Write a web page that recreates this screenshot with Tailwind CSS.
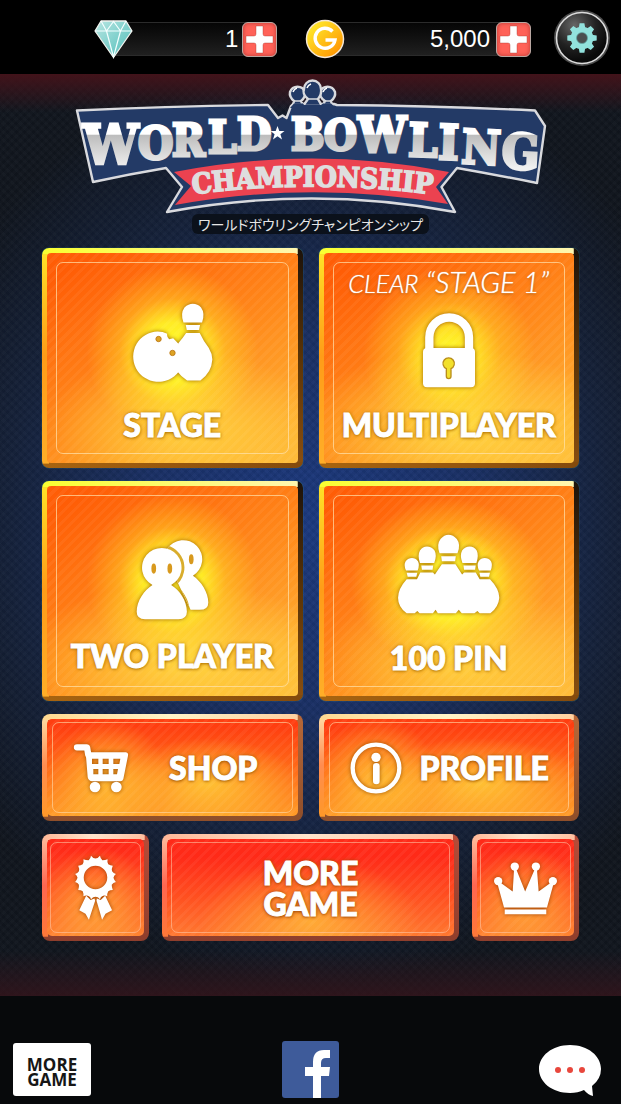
<!DOCTYPE html>
<html lang="en">
<head>
<meta charset="utf-8">
<meta name="viewport" content="width=device-width, initial-scale=1">
<title>World Bowling Championship</title>
<script src="https://cdn.jsdelivr.net/npm/@tailwindcss/browser@4"></script>
</head>
<body class="flex min-h-screen flex-col bg-[#070809] font-['Lato','Noto_Sans_CJK_JP',sans-serif] text-white">

<header class="flex h-[74px] items-center bg-black pt-1 pr-[10px] pl-[94px]">
  <!-- gems -->
  <div class="flex flex-[183] items-center">
    <svg class="relative h-[39px] w-[39px] shrink-0" viewBox="0 0 39 39" aria-hidden="true">
      <defs><linearGradient id="gem" x1="0" y1="0" x2="1" y2="1"><stop offset="0" stop-color="#b8e6e2"/><stop offset="1" stop-color="#4ebdb9"/></linearGradient></defs>
      <path d="M7 1H32L38 11L19.500 37.500L1 11Z" fill="url(#gem)" stroke="#f2f2ee" stroke-width="1.300" stroke-linejoin="round"/>
      <path d="M1 11H38M7 1L12.500 11L19.500 1.500L26.500 11L32 1M12.500 11L19.500 37L26.500 11" fill="none" stroke="#f4ffff" stroke-width="1.200"/>
    </svg>
    <div class="-mr-1 -ml-5 flex h-[34px] flex-1 items-center justify-end border-y border-[#2b2b2b] bg-linear-to-b from-[#060606] to-[#202020] pr-2 font-['Liberation_Sans',sans-serif] text-2xl">1</div>
    <button aria-label="Add gems" class="relative flex size-[35px] items-center justify-center rounded-md border border-[#b9a7a2] bg-[#ff6258] shadow-[inset_0_0_4px_#b83a34]">
      <svg class="size-[29px]" viewBox="0 0 29 29"><path d="M11 1H18V9Q18 11 20 11H28V18H20Q18 18 18 20V28H11V20Q11 18 9 18H1V11H9Q11 11 11 9Z" fill="#fff" stroke="#a93730" stroke-width=".4"/></svg>
    </button>
  </div>
  <!-- coins -->
  <div class="ml-[28px] flex flex-[225] items-center">
    <svg class="relative h-[40px] w-[40px] shrink-0" viewBox="0 0 40 40" aria-hidden="true">
      <defs><linearGradient id="coin" x1="0" y1="0" x2="1" y2="1"><stop offset=".1" stop-color="#ffec2c"/><stop offset=".9" stop-color="#ff9300"/></linearGradient></defs>
      <circle cx="20" cy="20" r="18.500" fill="url(#coin)" stroke="#f3e6d6" stroke-width="1.500"/>
      <path d="M27.500 12.500A10 10 0 1 0 30 21H20.500" fill="none" stroke="#fff" stroke-width="3.400"/>
    </svg>
    <div class="-mr-1 -ml-5 flex h-[34px] flex-1 items-center justify-end border-y border-[#2b2b2b] bg-linear-to-b from-[#060606] to-[#202020] pr-[10px] font-['Liberation_Sans',sans-serif] text-2xl">5,000</div>
    <button aria-label="Add coins" class="relative flex size-[35px] items-center justify-center rounded-md border border-[#b9a7a2] bg-[#ff6258] shadow-[inset_0_0_4px_#b83a34]">
      <svg class="size-[29px]" viewBox="0 0 29 29"><path d="M11 1H18V9Q18 11 20 11H28V18H20Q18 18 18 20V28H11V20Q11 18 9 18H1V11H9Q11 11 11 9Z" fill="#fff" stroke="#a93730" stroke-width=".4"/></svg>
    </button>
  </div>
  <button aria-label="Settings" class="ml-[22px] size-[58px] shrink-0">
    <svg viewBox="0 0 58 58">
      <defs>
        <radialGradient id="knob" cx=".35" cy=".25" r=".7"><stop offset="0" stop-color="#666"/><stop offset=".6" stop-color="#222"/><stop offset="1" stop-color="#0a0a0a"/></radialGradient>
      </defs>
      <circle cx="29" cy="28" r="28" fill="#4c4c4c"/>
      <circle cx="29" cy="28" r="25.500" fill="url(#knob)" stroke="#dcdcdc" stroke-width="1.600"/>
      <g fill="#92e2dd">
        <path d="M26.600 13.300H31.400L32.600 20H25.400ZM25.400 36H32.600L31.400 42.700H26.600ZM14.300 25.600V30.400L21 31.600V24.400ZM37 24.400V31.600L43.700 30.400V25.600Z"/>
        <path transform="rotate(45 29 28)" d="M26.600 13.300H31.400L32.600 20H25.400ZM25.400 36H32.600L31.400 42.700H26.600ZM14.300 25.600V30.400L21 31.600V24.400ZM37 24.400V31.600L43.700 30.400V25.600Z"/>
        <circle cx="29" cy="28" r="11.300"/>
      </g>
      <circle cx="29" cy="28" r="5.500" fill="#4b4f50" stroke="#60a5a2" stroke-width=".7"/>
    </svg>
  </button>
</header>

<main class="flex flex-1 flex-col items-center bg-[linear-gradient(#42131a_0,#42131a00_38px),linear-gradient(to_top,#34141bd0_0,#34141b00_45px),repeating-linear-gradient(45deg,#ffffff03_0_3px,#00000008_3px_6px),repeating-linear-gradient(135deg,#ffffff03_0_3px,#00000008_3px_6px),radial-gradient(ellipse_68%_50%_at_50%_49%,#1c3a80_0,#1a3064_40%,#15213a_72%,#11161e_100%)] px-[42px] pt-1 pb-[54px]">

  <h1 class="w-full max-w-[472px]" aria-label="World Bowling Championship">
  <svg class="w-full" viewBox="75 78 472 136">
    <defs>
      <linearGradient id="steel" gradientUnits="userSpaceOnUse" x1="0" y1="110" x2="0" y2="174"><stop offset="0" stop-color="#fff"/><stop offset=".38" stop-color="#fff"/><stop offset=".39" stop-color="#bcbcbc"/><stop offset=".9" stop-color="#f0f0f0"/></linearGradient>
      <path id="arc" d="M180 196Q312 177 445 196"/>
    </defs>
    <g fill="#233a66" stroke="#d9dade" stroke-width="2.400">
      <path stroke-linejoin="round" d="M77 110.500Q170 106 268 105L278 118L282.500 115.500L286.500 118L291 106L293 104H334L337 105Q440 106 535 110.500L545 126L537 183Q497 175 457 168L441.500 187L455 212Q312 185 167 212L182 187L166 168Q130 174 93 182Z"/>
      <path d="M293 105L294 101Q289 97 290 92A8 8 0 0 1 305 92Q306 97 301 101L303 105ZM323 105L325 101Q319 97 320 92A8 8 0 0 1 335 92Q336 97 331 101L332 105Z"/>
      <path d="M303 106L308 99Q302 94 304 89A8.500 8.500 0 0 1 321 89Q322 94 318 99L322 106Z"/>
    </g>
    <path d="M294 103.500H303L304 105H321L323 103.500H331L336 108H290Z" fill="#233a66"/>
    <path d="M294 101H302M308 99H318M323 101H332" stroke="#d9dade" stroke-width="1.400"/>
    <path d="M293 92Q294 89 297 88M307 88Q308 85 311 84M323 92Q324 89 327 88" fill="none" stroke="#fff" stroke-width="1.500"/>
    <path d="M174 172Q312 145 449 172L436 187L448 204Q312 180 175 205L191 186Z" fill="#eb4250"/>
    <g fill="url(#steel)" stroke="url(#steel)" stroke-width="3" font-family="'DejaVu Serif Condensed','DejaVu Serif',serif" font-weight="700">
      <text><tspan x="83" y="164" font-size="55">W</tspan><tspan x="138" y="159" font-size="45">O</tspan><tspan x="172" y="156" font-size="44">R</tspan><tspan x="208" y="153" font-size="45">L</tspan><tspan x="237" y="150" font-size="44">D</tspan></text>
      <text><tspan x="291" y="150" font-size="44">B</tspan><tspan x="324" y="150" font-size="42">O</tspan><tspan x="358" y="152" font-size="48">W</tspan><tspan x="408" y="156" font-size="46" rotate="2">L</tspan><tspan x="438" y="159" font-size="48" rotate="2">I</tspan><tspan x="461" y="163" font-size="47" rotate="3">N</tspan><tspan x="501" y="168" font-size="49" rotate="3">G</tspan></text>
    </g>
    <path d="M277.500 126L279.300 131H284.500L280.400 134.200L282 139.500L277.500 136.300L273 139.500L274.600 134.200L270.500 131H275.700Z" fill="#fff"/>
    <text fill="#dedede" stroke="#dedede" stroke-width="1.600" font-family="'DejaVu Serif Condensed','DejaVu Serif',serif" font-weight="700" font-size="28" text-anchor="middle"><textPath href="#arc" startOffset="50%">CHAMPIONSHIP</textPath></text>
  </svg>
  </h1>
  <p class="flex h-5 items-center rounded-md bg-[#0b111b] px-[6px] font-['Noto_Sans_CJK_JP',sans-serif] text-[14px] leading-5 whitespace-nowrap text-[#e6e6e6] [font-feature-settings:'palt']">ワールドボウリングチャンピオンシップ</p>

  <nav class="mt-[14px] grid w-full grid-cols-2 gap-x-4 gap-y-[13px]" aria-label="Main menu">

    <button class="relative h-[220px] rounded-[7px] bg-[linear-gradient(to_right,#f9ff30,#fff6b0),linear-gradient(#ffe528,#ff9c18_50%,#ffae28),linear-gradient(to_right,#a86410,#844a0c),linear-gradient(#1c120a,#5b3406_50%,#8a4f10)] bg-[length:98%_6px,7px_98%,100%_6px,100%_100%] bg-[position:0_0,0_0,0_100%,0_0] bg-no-repeat p-[5px] shadow-[0_0_1px_#41c4c8]">
      <span class="flex h-full flex-col items-center justify-end rounded-[4px] bg-[repeating-linear-gradient(135deg,#ffffff0c_0_3px,#ffffff00_3px_7px),radial-gradient(circle_86px_at_50%_47%,#ffff28_0,#ffff28d8_34%,#ffee2860_62%,#ffee3000_100%),radial-gradient(ellipse_54%_36%_at_54%_82%,#fff04aa0_0,#fff04a00_100%),linear-gradient(150deg,#ff5d06_8%,#ff8c1c_55%,#ffbb3a)] pb-[18px]">
        <span class="pointer-events-none absolute inset-[14px] rounded-[7px] border border-[#ffe4b0b0]"></span>
        <svg class="mb-[22px] h-[80px] w-[81px] drop-shadow-[0_0_2px_#a06000]" viewBox="292 183 244 240" fill="#fff">
          <path d="M369 268Q385 268 398 275Q396 284 404 292L416 289L432 305V390A76 76 0 1 1 369 268Z"/>
          <path d="M447 241Q437 214 450 196Q462 185 475 185Q490 185 500 196Q513 214 503 241ZM454 249H497L494 264H457ZM455 273H496Q507 297 523 317Q534 335 534 353Q532 392 498 416H458Q438 402 428 388Q410 350 432 303Q446 287 455 273Z"/>
          <g fill="#dda323" stroke="#c17e1a" stroke-width="3"><circle cx="372" cy="291" r="8"/><circle cx="414" cy="333" r="8"/></g>
        </svg>
        <span class="text-[32px] leading-10 font-black [-webkit-text-stroke:1px_#fff] [text-shadow:0_0_4px_#a86a00,0_1px_3px_#b87800]">STAGE</span>
      </span>
    </button>

    <button class="relative h-[220px] rounded-[7px] bg-[linear-gradient(to_right,#f9ff30,#fff6b0),linear-gradient(#ffe528,#ff9c18_50%,#ffae28),linear-gradient(to_right,#a86410,#844a0c),linear-gradient(#1c120a,#5b3406_50%,#8a4f10)] bg-[length:98%_6px,7px_98%,100%_6px,100%_100%] bg-[position:0_0,0_0,0_100%,0_0] bg-no-repeat p-[5px] shadow-[0_0_1px_#41c4c8]">
      <span class="flex h-full flex-col items-center justify-end rounded-[4px] bg-[repeating-linear-gradient(135deg,#ffffff0c_0_3px,#ffffff00_3px_7px),radial-gradient(circle_86px_at_50%_48%,#ffff28_0,#ffff28c0_30%,#ffee2858_60%,#ffee3000_100%),radial-gradient(ellipse_64%_36%_at_54%_82%,#fff04ab0_0,#fff04a00_100%),linear-gradient(150deg,#ff5d06_8%,#ff8c1c_55%,#ffbb3a)] pb-[18px]">
        <span class="pointer-events-none absolute inset-[14px] rounded-[7px] border border-[#ffe4b0b0]"></span>
        <span class="mb-[13px] text-[29px] leading-8 font-light whitespace-nowrap italic [text-shadow:0_0_1px_#fff,0_1px_3px_#a05000]"><span class="text-[25px] leading-8">CLEAR</span> “STAGE 1”</span>
        <svg class="mb-[17px] h-[76px] w-[54px] drop-shadow-[0_0_2px_#a06000]" viewBox="335 212 162 228" fill="#fff">
          <path d="M357 328V288A59 59 0 0 1 476 288V328" fill="none" stroke="#fff" stroke-width="25"/>
          <rect x="338" y="320" width="156" height="118" rx="12"/>
          <path d="M408 382A17 17 0 1 1 422 382V405Q422 412 415 412Q408 412 408 405Z" fill="#f2e02c" stroke="#b98d1a" stroke-width="4"/>
        </svg>
        <span class="text-[32px] leading-10 font-black [-webkit-text-stroke:1px_#fff] [text-shadow:0_0_4px_#a86a00,0_1px_3px_#b87800]">MULTIPLAYER</span>
      </span>
    </button>

    <button class="relative h-[220px] rounded-[7px] bg-[linear-gradient(to_right,#f9ff30,#fff6b0),linear-gradient(#ffe528,#ff9c18_50%,#ffae28),linear-gradient(to_right,#a86410,#844a0c),linear-gradient(#1c120a,#5b3406_50%,#8a4f10)] bg-[length:98%_6px,7px_98%,100%_6px,100%_100%] bg-[position:0_0,0_0,0_100%,0_0] bg-no-repeat p-[5px] shadow-[0_0_1px_#41c4c8]">
      <span class="flex h-full flex-col items-center justify-end rounded-[4px] bg-[repeating-linear-gradient(135deg,#ffffff0c_0_3px,#ffffff00_3px_7px),radial-gradient(circle_86px_at_50%_45%,#ffff28_0,#ffff28d8_34%,#ffee2860_62%,#ffee3000_100%),radial-gradient(ellipse_64%_36%_at_54%_82%,#fff04ab0_0,#fff04a00_100%),linear-gradient(150deg,#ff5d06_8%,#ff8c1c_55%,#ffbb3a)] pb-5">
        <span class="pointer-events-none absolute inset-[14px] rounded-[7px] border border-[#ffe4b0b0]"></span>
        <svg class="mb-4 h-[82px] w-[75px] drop-shadow-[0_0_2px_#a06000]" viewBox="302 188 224 244" fill="#fff">
          <defs><clipPath id="rear"><path d="M398 220A57 57 0 1 1 475 300C500 317 521 350 521 380Q521 402 495 402H468L420 300Z"/></clipPath></defs>
          <path d="M398 220A57 57 0 1 1 475 300C500 317 521 350 521 380Q521 402 495 402H468L420 300Z"/>
          <path clip-path="url(#rear)" d="M354 328A59 59 0 1 1 410 328C435 343 457 375 457 408Q457 430 432 430H332Q307 430 307 408C307 375 330 343 354 328Z" stroke="#d9ad2c" stroke-width="17" stroke-linejoin="round"/>
          <path d="M354 328A59 59 0 1 1 410 328C435 343 457 375 457 408Q457 430 432 430H332Q307 430 307 408C307 375 330 343 354 328Z"/>
          <g fill="#d8991d"><ellipse cx="358" cy="279" rx="7" ry="15"/><ellipse cx="406" cy="279" rx="7" ry="15"/><ellipse cx="470" cy="251" rx="7" ry="15"/></g>
        </svg>
        <span class="text-[32px] leading-10 font-black whitespace-nowrap [-webkit-text-stroke:1px_#fff] [text-shadow:0_0_4px_#a86a00,0_1px_3px_#b87800]">TWO PLAYER</span>
      </span>
    </button>

    <button class="relative h-[220px] rounded-[7px] bg-[linear-gradient(to_right,#f9ff30,#fff6b0),linear-gradient(#ffe528,#ff9c18_50%,#ffae28),linear-gradient(to_right,#a86410,#844a0c),linear-gradient(#1c120a,#5b3406_50%,#8a4f10)] bg-[length:98%_6px,7px_98%,100%_6px,100%_100%] bg-[position:0_0,0_0,0_100%,0_0] bg-no-repeat p-[5px] shadow-[0_0_1px_#41c4c8]">
      <span class="flex h-full flex-col items-center justify-end rounded-[4px] bg-[repeating-linear-gradient(135deg,#ffffff0c_0_3px,#ffffff00_3px_7px),radial-gradient(ellipse_98px_84px_at_50%_46%,#ffff28_0,#ffff28d8_40%,#ffee2860_66%,#ffee3000_100%),radial-gradient(ellipse_54%_36%_at_54%_82%,#fff04aa0_0,#fff04a00_100%),linear-gradient(150deg,#ff5d06_8%,#ff8c1c_55%,#ffbb3a)] pb-[18px]">
        <span class="pointer-events-none absolute inset-[14px] rounded-[7px] border border-[#ffe4b0b0]"></span>
        <svg class="mb-[23px] h-[81px] w-[103px] drop-shadow-[0_0_2px_#a06000]" viewBox="262 175 308 244" fill="#fff">
          <path d="M389 233Q379 207 392 190Q403 177 416 177Q430 177 441 190Q454 207 443 233ZM394 242H438L436 257H396Z"/>
          <path d="M330 262Q322 240 330 225Q338 213 351 213Q365 213 374 225Q382 240 373 262ZM334 270H370L368 283H336ZM458 262Q449 240 457 225Q466 213 480 213Q493 213 501 225Q508 240 500 262ZM461 270H498L496 283H463Z"/>
          <path d="M288 285Q280 268 287 257Q295 247 306 247Q317 247 324 257Q330 268 323 285ZM290 292H322L319 304H293ZM508 285Q500 268 507 257Q514 247 525 247Q537 247 544 257Q550 268 543 285ZM509 292H541L538 304H512Z"/>
          <path d="M290 311H321L331 291H369L375 297L396 266H437L457 297L463 291H498L510 311H541Q569 340 569 367Q567 395 542 414H510L503 407L494 414H456L447 403L438 414H384L377 403L369 414H329L322 407L314 414H290Q264 395 264 367Q264 340 290 311Z"/>
        </svg>
        <span class="text-[32px] leading-10 font-black whitespace-nowrap [-webkit-text-stroke:1px_#fff] [text-shadow:0_0_4px_#a86a00,0_1px_3px_#b87800]">100 PIN</span>
      </span>
    </button>

    <button class="relative h-[107px] rounded-[8px] bg-[linear-gradient(to_right,#ffd890,#fff4c8_50%,#ffd0a0),linear-gradient(#ffe0a8,#ff8c50_50%,#ff9828),linear-gradient(#b86838,#8e4e2a)] bg-[length:98%_6px,6px_96%,100%_100%] bg-[position:0_0,0_0,0_0] bg-no-repeat p-[5px]">
      <span class="flex h-full items-center rounded-[5px] bg-[repeating-linear-gradient(135deg,#ffffff0c_0_3px,#ffffff00_3px_7px),radial-gradient(circle_60px_at_24%_62%,#ffd83ab0_0,#ffd83a00_100%),radial-gradient(ellipse_90px_45px_at_64%_66%,#ffd83ac0_0,#ffd83a00_100%),linear-gradient(#ff3e10_8%,#ff6a18_50%,#ff9c28)] pl-[26px]">
        <span class="pointer-events-none absolute inset-x-[10px] inset-y-2 rounded-[7px] border border-[#ffd8a8a0]"></span>
        <svg class="h-[50px] w-[56px] drop-shadow-[0_0_2px_#a05000]" viewBox="114 104 168 150" fill="#fff">
          <path d="M126 117H156L160 140" fill="none" stroke="#fff" stroke-width="19" stroke-linecap="round" stroke-linejoin="round"/>
          <path fill-rule="evenodd" d="M152 132H273Q281 133 279 142L265 212Q263 219 256 219H172Q160 218 158 206ZM171 151V167H190V151ZM203 151V167H221V151ZM235 151V167H253L256 151ZM175 182V198H190V182ZM203 182V198H221V182ZM235 182V198H246L249 182Z"/>
          <circle cx="180" cy="236" r="16"/><circle cx="244" cy="236" r="16"/>
        </svg>
        <span class="ml-[40px] text-[32px] leading-10 font-black [-webkit-text-stroke:1px_#fff] [text-shadow:0_0_4px_#9c5000,0_1px_3px_#a86000]">SHOP</span>
      </span>
    </button>

    <button class="relative h-[107px] rounded-[8px] bg-[linear-gradient(to_right,#ffd890,#fff4c8_50%,#ffd0a0),linear-gradient(#ffe0a8,#ff8c50_50%,#ff9828),linear-gradient(#b86838,#8e4e2a)] bg-[length:98%_6px,6px_96%,100%_100%] bg-[position:0_0,0_0,0_0] bg-no-repeat p-[5px]">
      <span class="flex h-full items-center rounded-[5px] bg-[repeating-linear-gradient(135deg,#ffffff0c_0_3px,#ffffff00_3px_7px),radial-gradient(circle_60px_at_21%_60%,#ffd83ab0_0,#ffd83a00_100%),radial-gradient(ellipse_110px_45px_at_62%_66%,#ffd83ac0_0,#ffd83a00_100%),linear-gradient(#ff3e10_8%,#ff6a18_50%,#ff9c28)] pl-[26px]">
        <span class="pointer-events-none absolute inset-x-[10px] inset-y-2 rounded-[7px] border border-[#ffd8a8a0]"></span>
        <svg class="size-[52px] drop-shadow-[0_0_2px_#a05000]" viewBox="118 102 156 156" fill="#fff">
          <circle cx="196" cy="180" r="70" fill="none" stroke="#fff" stroke-width="13"/>
          <circle cx="196" cy="148" r="14"/><rect x="187" y="165" width="20" height="64" rx="10"/>
        </svg>
        <span class="ml-[18px] text-[32px] leading-10 font-black [-webkit-text-stroke:1px_#fff] [text-shadow:0_0_4px_#9c5000,0_1px_3px_#a86000]">PROFILE</span>
      </span>
    </button>

    <div class="col-span-2 flex gap-[13px]">
      <button aria-label="Awards" class="relative h-[107px] w-[107px] shrink-0 rounded-[8px] bg-[linear-gradient(to_right,#ffb898,#ffe4cc_50%,#ffc0a0),linear-gradient(#ffc0a0,#ff6650_50%,#ff7838),linear-gradient(#b84c38,#8e3e2c)] bg-[length:96%_6px,6px_96%,100%_100%] bg-[position:0_0,0_0,0_0] bg-no-repeat p-[5px]">
        <span class="flex h-full items-center justify-center rounded-[5px] bg-[repeating-linear-gradient(135deg,#ffffff0c_0_3px,#ffffff00_3px_7px),radial-gradient(circle_58px_at_50%_68%,#ffb43ac0_0,#ffb43a00_100%),linear-gradient(#ff2a18_10%,#ff5020_50%,#ff8030)]">
          <span class="pointer-events-none absolute inset-2 rounded-[7px] border border-[#ffc8a890]"></span>
          <svg class="h-[65px] w-[43px] drop-shadow-[0_0_2px_#a04000]" viewBox="108 86 122 188" fill="#fff">
            <path d="M142 204L155 216L166 212L168 218L150 273L140 256L122 246ZM197 204L184 216L173 212L172 218L188 273L198 256L217 246Z"/>
            <path fill-rule="evenodd" d="M169 96Q176 96 182 88Q183 96 189 101Q197 101 204 98Q202 106 206 113Q212 117 219 117Q215 125 217 133Q221 139 228 141Q222 146 221 152Q223 159 228 164Q220 166 216 172Q216 180 219 187Q211 187 206 191Q202 198 203 205Q194 202 188 205Q183 208 182 214Q176 207 169 207Q162 207 156 214Q155 208 150 205Q143 202 134 205Q135 198 132 191Q127 187 119 187Q122 180 121 172Q118 166 110 164Q115 159 117 152Q116 146 110 141Q117 139 121 133Q123 125 119 117Q126 117 132 113Q136 106 134 98Q141 101 149 101Q155 96 156 88Q162 96 169 96ZM169 117A34 34 0 1 0 169 185A34 34 0 1 0 169 117Z"/>
          </svg>
        </span>
      </button>
      <button class="relative h-[107px] flex-1 rounded-[8px] bg-[linear-gradient(to_right,#ffb898,#ffe4cc_50%,#ffc0a0),linear-gradient(#ffc0a0,#ff6650_50%,#ff7838),linear-gradient(#b84c38,#8e3e2c)] bg-[length:98%_6px,6px_96%,100%_100%] bg-[position:0_0,0_0,0_0] bg-no-repeat p-[5px]">
        <span class="flex h-full items-center justify-center rounded-[5px] bg-[repeating-linear-gradient(135deg,#ffffff0c_0_3px,#ffffff00_3px_7px),radial-gradient(ellipse_110px_62px_at_50%_84%,#ffc83ab0_0,#ffb43a00_100%),linear-gradient(#ff2a18_18%,#ff5020_60%,#ff7830)]">
          <span class="pointer-events-none absolute inset-x-[9px] inset-y-2 rounded-[7px] border border-[#ffc8a890]"></span>
          <span class="text-[32px] leading-[31px] font-black [-webkit-text-stroke:1px_#fff] [text-shadow:0_0_4px_#9c4000,0_1px_3px_#a85000]">MORE<br>GAME</span>
        </span>
      </button>
      <button aria-label="Leaderboard" class="relative h-[107px] w-[107px] shrink-0 rounded-[8px] bg-[linear-gradient(to_right,#ffb898,#ffe4cc_50%,#ffc0a0),linear-gradient(#ffc0a0,#ff6650_50%,#ff7838),linear-gradient(#b84c38,#8e3e2c)] bg-[length:96%_6px,6px_96%,100%_100%] bg-[position:0_0,0_0,0_0] bg-no-repeat p-[5px]">
        <span class="flex h-full items-center justify-center rounded-[5px] bg-[repeating-linear-gradient(135deg,#ffffff0c_0_3px,#ffffff00_3px_7px),radial-gradient(circle_58px_at_50%_68%,#ffb43ac0_0,#ffb43a00_100%),linear-gradient(#ff2a18_10%,#ff5020_50%,#ff8030)]">
          <span class="pointer-events-none absolute inset-2 rounded-[7px] border border-[#ffc8a890]"></span>
          <svg class="h-[54px] w-[65px] drop-shadow-[0_0_2px_#a04000]" viewBox="1307 102 186 156" fill="#fff">
            <circle cx="1321" cy="160" r="12"/><circle cx="1369" cy="118" r="12"/><circle cx="1430" cy="118" r="12"/><circle cx="1479" cy="160" r="12"/>
            <path d="M1319 168L1327 164L1363 190L1367 125H1373L1399 190L1427 125H1433L1438 190L1474 164L1481 168L1462 236H1338ZM1340 242H1460V256H1340Z"/>
          </svg>
        </span>
      </button>
    </div>
  </nav>
</main>

<footer class="grid h-[108px] grid-cols-3 items-end bg-[#07090b] px-[13px] pb-[6px]">
  <button class="mb-[2px] h-[53px] w-[78px] rounded-[3px] bg-white pt-1 font-['Open_Sans',sans-serif] text-[17px] leading-[15px] font-bold text-[#161616]">MORE<br>GAME</button>
  <a href="#facebook" aria-label="Facebook" class="justify-self-center">
    <svg class="h-[57px] w-[57px]" viewBox="0 0 57 57"><rect width="57" height="57" rx="3" fill="#3e5b9a"/><path d="M31 57V35H23V26H31V21Q31 9 42 9H48V17H44Q39 17 39 22V26H48L47 35H39V57Z" fill="#fff"/></svg>
  </a>
  <button aria-label="Messages" class="mr-[6px] justify-self-end">
    <svg class="h-[54px] w-[64px]" viewBox="0 0 64 54"><path d="M32 1C14 1 1 12 1 25S14 49 32 49Q40 49 46 46Q50 51 55 52L54 42Q63 35 63 25C63 12 50 1 32 1Z" fill="#fff"/><g fill="#e8473c"><circle cx="20" cy="26" r="3"/><circle cx="32" cy="26" r="3"/><circle cx="44" cy="26" r="3"/></g></svg>
  </button>
</footer>
</body>
</html>
